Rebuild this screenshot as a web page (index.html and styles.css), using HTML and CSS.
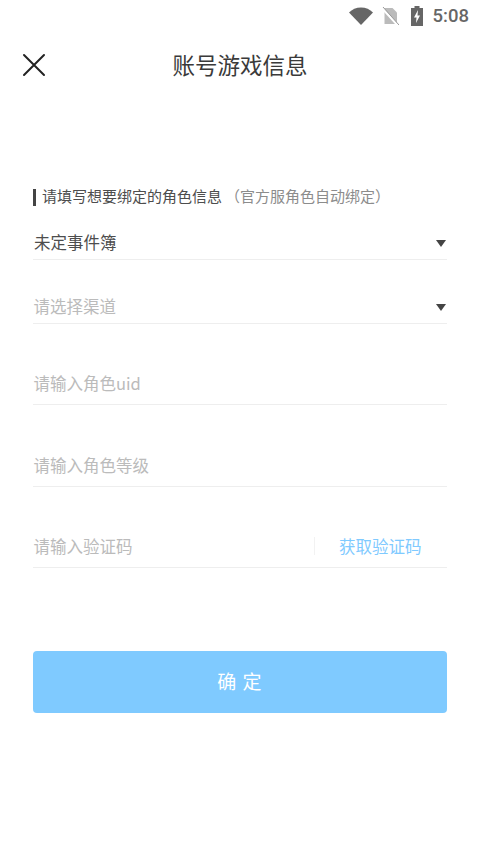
FILE: index.html
```html
<!DOCTYPE html>
<html lang="zh-CN">
<head>
<meta charset="utf-8">
<title>账号游戏信息</title>
<link rel="stylesheet" href="styles.css">
</head>
<body>
<div class="status">
  <svg class="wifi" width="24" height="18" viewBox="0 0 24 18"><path d="M0 5.500C3 2.400 7.200.5 12 .5s9 1.900 12 5L12 18z" fill="#666"/></svg>
  <svg class="sim" width="17" height="18" viewBox="0 0 17 18"><path d="M2.500 1h8l4.500 4.500V17H2.500z" fill="#bbb"/><path d="M0 1l15.500 17" stroke="#fff" stroke-width="2.400"/><path d="M1 0l16 18" stroke="#999" stroke-width="1"/></svg>
  <svg class="batt" width="14" height="20" viewBox="0 0 14 20"><path d="M4.500 0h5v2H13v18H1V2h3.500z" fill="#666"/><path d="M8 4L4 11.500h2.500L6 17l4-7.500H7.500z" fill="#fff"/></svg>
  <span class="time">5:08</span>
</div>
<header class="nav">
  <svg class="close" width="24" height="24" viewBox="0 0 24 24"><path d="M2 2l20 20M22 2L2 22" stroke="#222" stroke-width="2" stroke-linecap="round" fill="none"/></svg>
  <h1 class="title">账号游戏信息</h1>
</header>
<main class="form">
  <p class="hint"><span class="hint-main">请填写想要绑定的角色信息</span><span class="hint-sub">（官方服角色自动绑定）</span></p>
  <div class="row row-first"><span class="value">未定事件簿</span><i class="arrow"></i></div>
  <div class="row row-select"><span class="ph">请选择渠道</span><i class="arrow"></i></div>
  <div class="row row-input"><span class="ph">请输入角色uid</span></div>
  <div class="row row-input row-level"><span class="ph">请输入角色等级</span></div>
  <div class="row row-input"><span class="ph">请输入验证码</span><span class="code">获取验证码</span></div>
  <button class="submit" type="button">确 定</button>
</main>
</body>
</html>
```

FILE: styles.css
```css
* { box-sizing: border-box; }
html, body { margin: 0; padding: 0; }
body {
  width: 480px;
  height: 854px;
  overflow: hidden;
  background: #fff;
  font-family: "Noto Sans CJK SC", "Roboto", sans-serif;
}
.status {
  height: 32px;
  display: flex;
  align-items: center;
  justify-content: flex-end;
  padding-right: 11px;
}
.wifi { margin-right: 9px; }
.sim { margin-right: 11px; }
.batt { margin-right: 9px; }
.time { font: 500 18.500px/32px Roboto, sans-serif; color: #666; }
.nav {
  position: relative;
  height: 66px;
  display: flex;
  align-items: center;
  justify-content: center;
  padding-bottom: 2px;
}
.close { position: absolute; left: 22px; top: 21px; }
.title {
  margin: 0;
  font-size: 22.500px;
  font-weight: 400;
  line-height: 64px;
  color: #3a3a3a;
}
.form { padding: 0 33px; }
.hint {
  margin: 0;
  margin-top: 91px;
  height: 17px;
  display: flex;
  align-items: center;
  font-size: 15px;
  line-height: 17px;
  border-left: 3px solid #444;
  padding: 0 0 5px 6px;
  white-space: nowrap;
}
.hint-main { color: #4d4d4d; }
.hint-sub { color: #8c8c8c; margin-left: 3px; }
.row {
  display: flex;
  align-items: center;
  justify-content: space-between;
  border-bottom: 1px solid #eee;
  width: 414px;
  position: relative;
}
.row-first { margin-top: 15px; height: 39px; padding-top: 4px; }
.row-select { margin-top: 24px; height: 40px; padding-top: 5px; }
.row-input { margin-top: 40px; height: 41px; padding-bottom: 2px; }
.row-level { margin-top: 41px; }
.value { font-size: 16.500px; color: #4d4d4d; padding-left: 1px; }
.ph { font-size: 16.500px; color: #bbb; padding-left: 0.500px; }
.arrow {
  width: 0;
  height: 0;
  margin-top: 3px;
  margin-right: 1px;
  border-left: 5.500px solid transparent;
  border-right: 5.500px solid transparent;
  border-top: 7px solid #444;
}
.code {
  font-size: 16.500px;
  color: #7fcaff;
  width: 133px;
  padding-left: 24px;
  line-height: 18px;
  border-left: 1px solid #f2f2f2;
}
.submit {
  display: block;
  width: 414px;
  height: 62px;
  margin-top: 83px;
  padding: 0 0 4px;
  border: 0;
  border-radius: 4px;
  background: #7fcaff;
  color: #fff;
  font-family: inherit;
  font-size: 19px;
  letter-spacing: 1px;
}
```
